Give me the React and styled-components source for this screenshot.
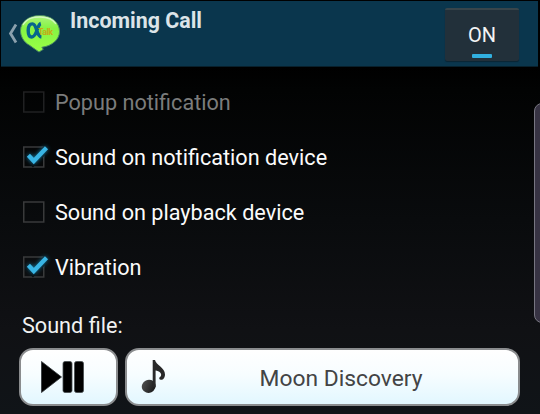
import React from 'react';
import styled, { createGlobalStyle } from 'styled-components';

const GlobalStyle = createGlobalStyle`
  * { box-sizing: border-box; }
  body {
    margin: 0;
    background: #000;
    font-family: Roboto, "Liberation Sans", sans-serif;
    overflow: hidden;
  }
`;

const Screen = styled.main`
  position: relative;
  width: 540px;
  height: 414px;
  padding: 1px 2px 0 1px;
  overflow: hidden;
  background: linear-gradient(#000 66px, #020303 90px, #090b0d 220px, #101114 330px, #101418 414px);
`;

const Header = styled.header`
  display: flex;
  align-items: flex-start;
  height: 66px;
  padding: 7px 19px 0 7px;
  background: #0a364d;
  border-bottom: 1px solid #08202c;
`;

const BackIcon = styled.svg`
  width: 10px;
  height: 20px;
  margin-top: 16px;
`;

const Logo = styled.svg`
  width: 42px;
  height: 42px;
  margin: 5px 0 0 1px;
`;

const Title = styled.h1`
  flex: 1;
  margin: 0 0 0 9px;
  font-size: 21.4px;
  line-height: 26px;
  font-weight: 700;
  color: #dce4e8;
`;

const Toggle = styled.button`
  display: flex;
  flex-direction: column;
  align-items: center;
  width: 74px;
  height: 53px;
  padding: 14px 0 0;
  border: 0;
  border-top: 2px solid #38454b;
  border-radius: 2px;
  background: #22303a;
  box-shadow: 0 1px 1px #0a2534;
  color: #f3f4f5;
  font-family: inherit;
  font-size: 20px;
  line-height: 23px;
`;

const ToggleBar = styled.span`
  width: 20px;
  height: 4px;
  margin-top: 7px;
  border-radius: 1px;
  background: #31b0e0;
`;

const Options = styled.section`
  display: flex;
  flex-direction: column;
  padding: 8px 0 0 21px;
`;

const Option = styled.label`
  display: flex;
  align-items: center;
  gap: 6px;
  height: 55px;
  color: ${(p) => (p.$disabled ? '#7b7c7c' : '#fbfbfb')};
  font-size: 21.65px;
  line-height: 26px;
`;

const OptionText = styled.span`
  padding-top: 1px;
`;

const CheckIcon = styled.svg`
  width: 27px;
  height: 28px;
  overflow: visible;
`;

const CheckMark = styled.path`
  filter: drop-shadow(0 0 2px #1681ab);
`;

const SectionLabel = styled.h2`
  margin: 18px 0 0 21px;
  font-size: 21.65px;
  line-height: 26px;
  font-weight: 400;
  color: #f1f2f2;
`;

const SoundControls = styled.div`
  display: flex;
  gap: 7px;
  margin: 9px 18px 0 18px;
`;

const SoundButton = styled.button`
  display: flex;
  align-items: center;
  flex: ${(p) => (p.$wide ? '1' : '0 0 99px')};
  height: 58px;
  padding: 0 0 0 ${(p) => (p.$wide ? '14px' : '19px')};
  border: 2px solid #8a8c8e;
  border-radius: 14px;
  background: linear-gradient(#fff, #f7fdff 45%, #e2f7ff);
  color: #434445;
  font-family: inherit;
  font-size: 22.8px;
`;

const PlayPauseIcon = styled.svg`
  width: 46px;
  height: 36px;
`;

const NoteIcon = styled.svg`
  width: 26px;
  height: 38px;
`;

const FileName = styled.span`
  flex: 1;
  padding: 2px 3px 0 0;
  text-align: center;
`;

const EdgeHandle = styled.aside`
  position: absolute;
  top: 103px;
  right: -10px;
  width: 16px;
  height: 220px;
  border: 1px solid #777681;
  border-radius: 8px;
  background: #373343;
`;

const options = [
  { label: 'Popup notification', checked: false, disabled: true },
  { label: 'Sound on notification device', checked: true },
  { label: 'Sound on playback device', checked: false },
  { label: 'Vibration', checked: true },
];

function Checkbox({ checked, disabled }) {
  return (
    <CheckIcon viewBox="0 0 27 28">
      <rect x="1.75" y="3" width="20" height="20" fill="none" stroke={disabled ? '#202122' : '#393a3b'} strokeWidth="1.5" />
      {checked && (
        <>
          <path d="M6 13 11 18.5 24.5 4.5" fill="none" stroke="#08090a" strokeWidth="7" />
          <CheckMark d="M6.4 11.2 11.8 17 24.5 3.8" fill="none" stroke="#39b5e5" strokeWidth="4.3" />
        </>
      )}
    </CheckIcon>
  );
}

export default function App() {
  return (
    <>
      <GlobalStyle />
      <Screen>
        <Header>
          <BackIcon viewBox="0 0 10 20">
            <path d="M8 0.5 2.5 9.5 8 18.5" fill="none" stroke="#8ba0ad" strokeWidth="2.8" />
          </BackIcon>
          <Logo viewBox="0 0 42 42">
            <defs>
              <linearGradient id="bubble" x1="0" y1="0" x2="0" y2="1">
                <stop offset="0" stopColor="#adf47d" />
                <stop offset="0.35" stopColor="#85f444" />
                <stop offset="1" stopColor="#9aff45" />
              </linearGradient>
            </defs>
            <path
              d="M21 2.5C9.8 2.5 1.5 9 1.5 17.5c0 6 3.2 11.5 9 14.8L20 39l4.3-2.7-1.5-2C33 33 40.5 26.5 40.5 18.5 40.5 9 32 2.5 21 2.5Z"
              fill="url(#bubble)"
              stroke="#4b8b62"
              strokeWidth="1"
            />
            <path d="M4 12C8 5 14 4 21 4s13 2 16 7" fill="none" stroke="#d1f7bf" strokeWidth="1.4" />
            <path
              d="M21.8 10.5C18.2 11.5 18 24 12.8 24 10 24 9.2 21 9.2 17.5s1.2-6.6 4.2-6.6c4.8 0 3.6 12.6 9 13.2"
              fill="none"
              stroke="#07658d"
              strokeWidth="3.4"
            />
            <text x="19" y="22" textLength="15" fontFamily="Roboto, sans-serif" fontSize="9" fontWeight="700" fill="#c4ac18">Talk</text>
          </Logo>
          <Title>Incoming Call</Title>
          <Toggle>
            ON
            <ToggleBar />
          </Toggle>
        </Header>
        <Options>
          {options.map(({ label, checked, disabled }) => (
            <Option key={label} $disabled={disabled}>
              <Checkbox checked={checked} disabled={disabled} />
              <OptionText>{label}</OptionText>
            </Option>
          ))}
        </Options>
        <SectionLabel>Sound file:</SectionLabel>
        <SoundControls>
          <SoundButton aria-label="Play or pause">
            <PlayPauseIcon viewBox="0 0 46 36">
              <path d="M1.5 2.5 21.5 18 1.5 33.5Z" fill="#000" stroke="#303538" strokeWidth="0.8" />
              <rect x="23" y="2.5" width="9" height="31" rx="2" fill="#000" stroke="#454b4e" strokeWidth="0.8" />
              <rect x="34.5" y="2.5" width="9" height="31" rx="2" fill="#000" stroke="#454b4e" strokeWidth="0.8" />
            </PlayPauseIcon>
          </SoundButton>
          <SoundButton $wide>
            <NoteIcon viewBox="0 0 26 38">
              <defs>
                <linearGradient id="note" x1="0" y1="0" x2="1" y2="1">
                  <stop offset="0" stopColor="#555" />
                  <stop offset="1" stopColor="#111" />
                </linearGradient>
              </defs>
              <ellipse cx="7.7" cy="28.3" rx="7" ry="6.5" transform="rotate(-25 7.7 28.3)" fill="url(#note)" />
              <path
                d="M11.7 29V2H14c1 5 10 7.5 10 14.5 0 3.2-2 5.8-4.4 5.3-2-.6-1.7-2.5 0-3.4 2-3-1.5-5.5-5-6V29Z"
                fill="#292929"
              />
            </NoteIcon>
            <FileName>Moon Discovery</FileName>
          </SoundButton>
        </SoundControls>
        <EdgeHandle />
      </Screen>
    </>
  );
}
